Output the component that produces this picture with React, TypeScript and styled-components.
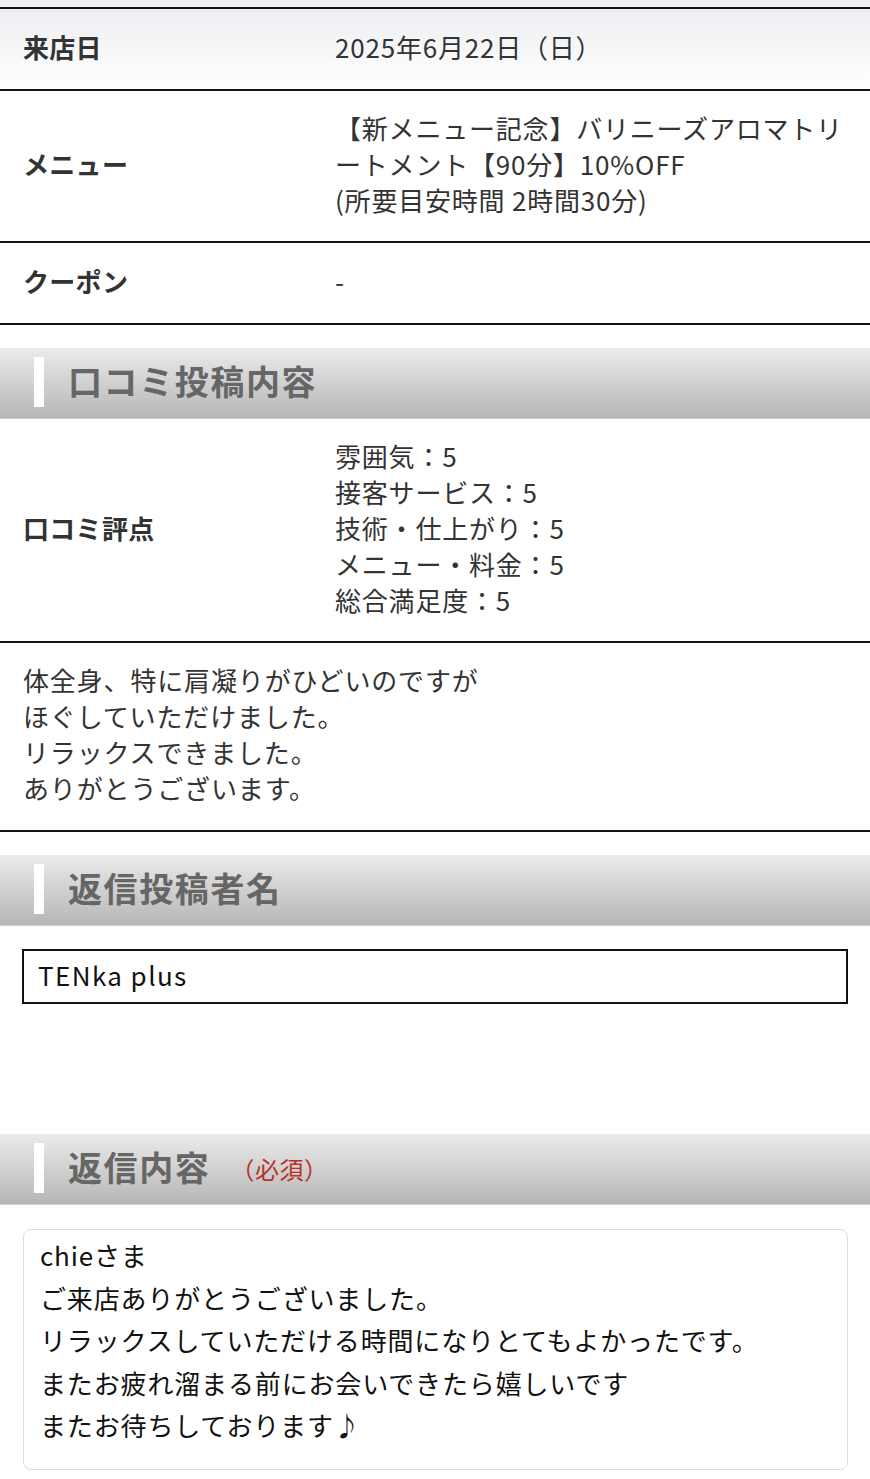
import React from 'react'
import styled, { createGlobalStyle } from 'styled-components'

const GlobalStyle = createGlobalStyle`
  html, body {
    margin: 0;
    padding: 0;
    background: #ffffff;
  }
  body {
    font-family: "Noto Sans CJK JP", "Noto Sans", sans-serif;
    color: #333333;
    -webkit-font-smoothing: antialiased;
  }
  * {
    box-sizing: border-box;
  }
`

const ratings = [
  '雰囲気：5',
  '接客サービス：5',
  '技術・仕上がり：5',
  'メニュー・料金：5',
  '総合満足度：5',
]

const comment = [
  '体全身、特に肩凝りがひどいのですが',
  'ほぐしていただけました。',
  'リラックスできました。',
  'ありがとうございます。',
]

const reply = [
  'chieさま',
  'ご来店ありがとうございました。',
  'リラックスしていただける時間になりとてもよかったです。',
  'またお疲れ溜まる前にお会いできたら嬉しいです',
  'またお待ちしております♪',
]

export default function App() {
  return (
    <>
      <GlobalStyle/>
      <S.Page>
        <S.TopStrip/>
        <S.Table>
          <S.Row $shaded>
            <S.Label>来店日</S.Label>
            <S.Value>2025年6月22日（日）</S.Value>
          </S.Row>
          <S.Row>
            <S.Label>メニュー</S.Label>
            <S.Value>
              【新メニュー記念】バリニーズアロマトリートメント【90分】10%OFF
              <br/>
              (所要目安時間 2時間30分)
            </S.Value>
          </S.Row>
          <S.Row>
            <S.Label>クーポン</S.Label>
            <S.Value>-</S.Value>
          </S.Row>
        </S.Table>

        <S.SectionHeader>
          <S.Bar/>
          <S.SectionTitle>口コミ投稿内容</S.SectionTitle>
        </S.SectionHeader>
        <S.Table $open>
          <S.Row>
            <S.Label>口コミ評点</S.Label>
            <S.Value>
              {ratings.map(r => <div key={r}>{r}</div>)}
            </S.Value>
          </S.Row>
          <S.Comment>
            {comment.map(c => <div key={c}>{c}</div>)}
          </S.Comment>
        </S.Table>

        <S.SectionHeader>
          <S.Bar/>
          <S.SectionTitle>返信投稿者名</S.SectionTitle>
        </S.SectionHeader>
        <S.Field>
          <S.NameInput readOnly value="TENka plus"/>
        </S.Field>

        <S.SectionHeader $spaced>
          <S.Bar/>
          <S.SectionTitle>返信内容</S.SectionTitle>
          <S.Required>（必須）</S.Required>
        </S.SectionHeader>
        <S.Field>
          <S.ReplyBox>
            {reply.map(l => <div key={l}>{l}</div>)}
          </S.ReplyBox>
        </S.Field>
      </S.Page>
    </>
  )
}

const S = {
  Page: styled.div`
    width: 870px;
    min-height: 1479px;
    background: #ffffff;
    overflow: hidden;
  `,

  TopStrip: styled.div`
    height: 7px;
    background: #eef0f2;
  `,

  Table: styled.div<{ $open?: boolean }>`
    border-top: ${p => (p.$open ? '0' : '2px solid #141414')};
  `,

  Row: styled.div<{ $shaded?: boolean }>`
    display: grid;
    grid-template-columns: 312px 1fr;
    align-items: center;
    min-height: 82px;
    padding: 19px 18px 23px 23px;
    border-bottom: 2px solid #141414;
    background: ${p => (p.$shaded ? 'linear-gradient(#eceef1, #ffffff)' : '#ffffff')};
    font-size: 26px;
    line-height: 36px;
  `,

  Label: styled.div`
    font-weight: 700;
    color: #333333;
    letter-spacing: 0.3px;
  `,

  Value: styled.div`
    color: #333333;
    letter-spacing: 0.8px;
  `,

  Comment: styled.div`
    padding: 19px 23px 24px;
    border-bottom: 2px solid #141414;
    font-size: 26px;
    line-height: 36px;
    letter-spacing: 0.85px;
    color: #333333;
  `,

  SectionHeader: styled.div<{ $spaced?: boolean }>`
    display: flex;
    align-items: center;
    height: 71px;
    margin-top: ${p => (p.$spaced ? '130px' : '23px')};
    padding-left: 34px;
    background: linear-gradient(#ebebeb, #b6b6b6);
    border-bottom: 1px solid #cfcfcf;
  `,

  Bar: styled.span`
    width: 10px;
    height: 50px;
    margin-top: -2px;
    margin-right: 24px;
    background: #ffffff;
  `,

  SectionTitle: styled.h2`
    margin: -5px 0 0;
    font-size: 34px;
    font-weight: 700;
    color: #666666;
    letter-spacing: 1.6px;
  `,

  Required: styled.span`
    margin-left: 20px;
    margin-top: -1px;
    font-size: 24px;
    color: #b8322a;
    letter-spacing: 0.5px;
  `,

  Field: styled.div`
    padding: 23px 22px 0 22px;
  `,

  NameInput: styled.input`
    display: block;
    width: 826px;
    height: 55px;
    padding: 0 14px 4px;
    border: 2px solid #111111;
    border-radius: 0;
    font-family: "Noto Sans CJK JP", "Noto Sans", sans-serif;
    font-size: 26px;
    letter-spacing: 1.4px;
    color: #111111;
    outline: none;
    background: #ffffff;
  `,

  ReplyBox: styled.div`
    margin-top: 1px;
    margin-left: 1px;
    width: 825px;
    height: 241px;
    padding: 4px 16px 23px;
    border: 1px solid #dddddd;
    border-radius: 8px;
    font-size: 26px;
    line-height: 42.5px;
    letter-spacing: 0.85px;
    color: #111111;
  `,
}
